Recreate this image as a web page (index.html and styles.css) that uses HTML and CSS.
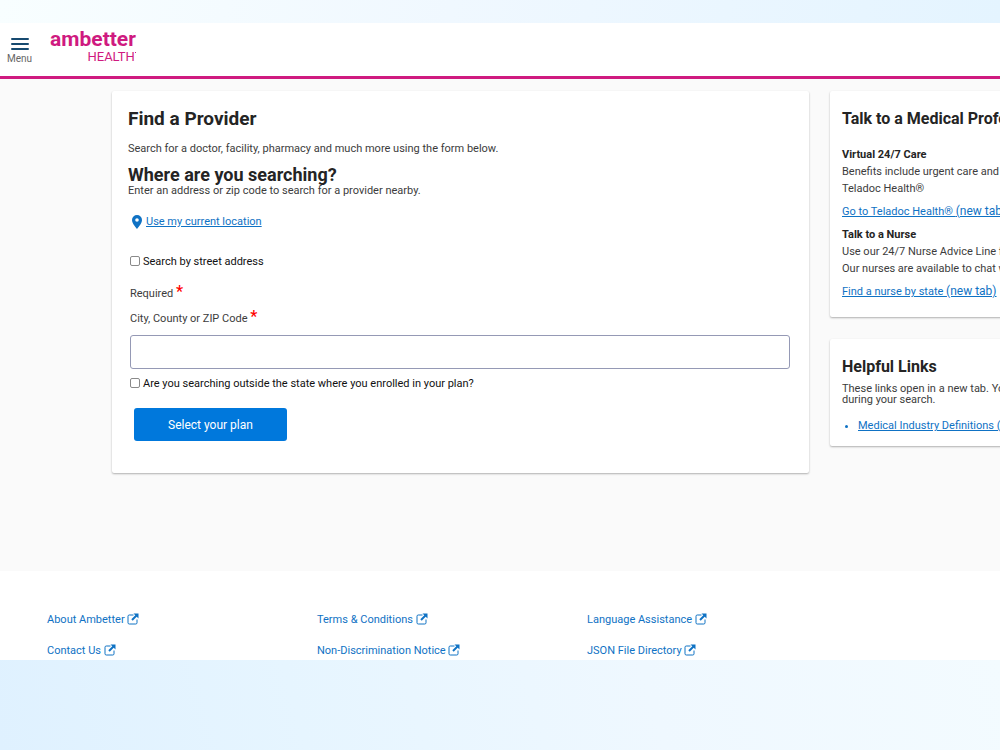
FILE: index.html
```
<!DOCTYPE html>
<html lang="en">
<head>
    <meta charset="UTF-8">
    <meta name="viewport" content="width=device-width, initial-scale=1.0">
    <title>Find a Provider - Ambetter Health</title>
    <link rel="stylesheet" href="styles.css">
</head>
<body>
    <svg class="sprite" aria-hidden="true">
        <symbol id="icon-external" viewBox="0 0 24 24">
            <path d="M13 4H4.500A2.500 2.500 0 0 0 2 6.500v13A2.500 2.500 0 0 0 4.500 22h13a2.500 2.500 0 0 0 2.500-2.500V13" fill="none" stroke="currentColor" stroke-width="2"/>
            <path d="M10 14 20 4" fill="none" stroke="currentColor" stroke-width="4"/>
            <path d="M13 1h10v10z" fill="currentColor"/>
        </symbol>
    </svg>

    <div class="site">
        <header class="site-header">
            <button type="button" class="menu-btn">
                <svg class="menu-icon" viewBox="0 0 20 14" aria-hidden="true">
                    <path d="M2 2h16M2 7h16M2 12h16" stroke="currentColor" stroke-width="2" stroke-linecap="round"/>
                </svg>
                Menu
            </button>
            <a href="#" class="logo">
                <span class="logo-name">ambetter</span>
                <span class="logo-sub">HEALTH<span class="logo-dot"></span></span>
            </a>
        </header>

        <main class="layout">
            <section class="card search-card">
                <h1>Find a Provider</h1>
                <p class="intro">Search for a doctor, facility, pharmacy and much more using the form below.</p>
                <h2>Where are you searching?</h2>
                <p>Enter an address or zip code to search for a provider nearby.</p>

                <form class="search-form">
                    <a href="#" class="location">
                        <svg class="pin" viewBox="0 0 10 14" aria-hidden="true">
                            <path fill-rule="evenodd" d="M5 0a5 5 0 0 0-5 5c0 3.500 5 9 5 9s5-5.500 5-9a5 5 0 0 0-5-5zm0 3.200a1.800 1.800 0 1 1 0 3.600 1.800 1.800 0 0 1 0-3.600z" fill="currentColor"/>
                        </svg>
                        <span>Use my current location</span>
                    </a>
                    <div class="check-row street">
                        <input type="checkbox" id="street">
                        <label for="street">Search by street address</label>
                    </div>
                    <p class="required">Required <span class="star">*</span></p>
                    <label class="field-label" for="place">City, County or ZIP Code <span class="star">*</span></label>
                    <input type="text" id="place" class="text-input">
                    <div class="check-row">
                        <input type="checkbox" id="outside">
                        <label for="outside">Are you searching outside the state where you enrolled in your plan?</label>
                    </div>
                    <button type="button" class="plan-btn">Select your plan</button>
                </form>
            </section>

            <aside class="sidebar">
                <section class="card side-card">
                    <h2>Talk to a Medical Professional</h2>
                    <div class="help-item">
                        <h3>Virtual 24/7 Care</h3>
                        <p>Benefits include urgent care and more from<br>Teladoc Health®</p>
                        <a href="#">Go to Teladoc Health® <span class="new-tab">(new tab)</span></a>
                    </div>
                    <div class="help-item">
                        <h3>Talk to a Nurse</h3>
                        <p>Use our 24/7 Nurse Advice Line for help.<br>Our nurses are available to chat with you.</p>
                        <a href="#">Find a nurse by state <span class="new-tab">(new tab)</span></a>
                    </div>
                </section>

                <section class="card side-card links-card">
                    <h2>Helpful Links</h2>
                    <p>These links open in a new tab. You can use them<br>during your search.</p>
                    <ul>
                        <li><a href="#">Medical Industry Definitions (PDF)</a></li>
                    </ul>
                </section>
            </aside>
        </main>

        <footer class="site-footer">
            <a href="#">About Ambetter <svg class="external"><use href="#icon-external"/></svg></a>
            <a href="#">Terms &amp; Conditions <svg class="external"><use href="#icon-external"/></svg></a>
            <a href="#">Language Assistance <svg class="external"><use href="#icon-external"/></svg></a>
            <a href="#">Contact Us <svg class="external"><use href="#icon-external"/></svg></a>
            <a href="#">Non-Discrimination Notice <svg class="external"><use href="#icon-external"/></svg></a>
            <a href="#">JSON File Directory <svg class="external"><use href="#icon-external"/></svg></a>
        </footer>
    </div>
</body>
</html>
```
FILE: styles.css
```
:root {
    --pink: #cf1a80;
    --link: #0f72c4;
    --button: #0078dc;
    --navy: #174a70;
    --text: #3c3c3c;
    --heading: #242424;
    --bg: #fafafa;
}

* {
    margin: 0;
    padding: 0;
    box-sizing: border-box;
}

body {
    min-height: 100vh;
    display: flex;
    flex-direction: column;
    padding: 23px 0 90px;
    overflow: hidden;
    font-family: Roboto, "Liberation Sans", sans-serif;
    font-size: 11px;
    line-height: 16px;
    color: var(--text);
    background:
        linear-gradient(100deg, #f8feff, #f0f8ff 45%, #e4f4ff) top / 100% 23px no-repeat,
        linear-gradient(75deg, #dff1ff, #e6f5ff 30%, #eff8ff 65%, #f3fbff) bottom / 100% 90px no-repeat;
}

a {
    color: var(--link);
}

h1,
h2,
h3 {
    color: var(--heading);
    font-weight: 700;
}

.sprite {
    display: none;
}

.site {
    flex: 1;
    display: flex;
    flex-direction: column;
    background: var(--bg);
    overflow: hidden;
}

/* Header */
.site-header {
    display: flex;
    align-items: flex-start;
    gap: 18px;
    height: 56px;
    padding: 5px 7px 0;
    background: #fff;
    border-bottom: 3px solid var(--pink);
}

.menu-btn {
    display: flex;
    flex-direction: column;
    align-items: center;
    gap: 2px;
    padding-top: 9px;
    border: 0;
    background: none;
    font: 10px/12px Roboto, sans-serif;
    color: #666;
    cursor: pointer;
}

.menu-icon {
    width: 20px;
    height: 14px;
    color: var(--navy);
}

.logo {
    display: flex;
    flex-direction: column;
    color: var(--pink);
    text-decoration: none;
}

.logo-name {
    font-size: 21px;
    line-height: 22px;
    font-weight: 700;
}

.logo-sub {
    display: flex;
    justify-content: flex-end;
    font-size: 13px;
    line-height: 13px;
}

.logo-dot {
    width: 1px;
    height: 1px;
    margin-top: 2px;
    background: var(--pink);
}

/* Cards */
.layout {
    flex: 1;
    display: grid;
    grid-template-columns: calc(70vw - 3px) 35vw;
    align-items: start;
    gap: 21px;
    padding: 12px 0 24px 112px;
}

.card {
    background: #fff;
    border-radius: 2px;
    box-shadow: 0 1px 2px rgba(0, 0, 0, 0.3);
}

.search-card {
    padding: 16px 19px 32px 16px;
}

.search-card h1 {
    font-size: 19px;
    line-height: 24px;
}

.search-card h2 {
    margin-top: 10px;
    font-size: 18px;
    line-height: 16px;
}

.intro {
    margin-top: 10px;
}

.search-form {
    display: flex;
    flex-direction: column;
    align-items: flex-start;
    padding: 15px 0 0 2px;
}

.location {
    display: flex;
    align-items: center;
    gap: 4px;
    padding-left: 2px;
    text-decoration: none;
}

.location span {
    text-decoration: underline;
}

.pin {
    width: 10px;
    height: 14px;
}

.check-row {
    display: flex;
    align-items: center;
    gap: 3px;
    margin-top: 7px;
    color: #111;
}

.check-row.street {
    margin-top: 24px;
}

.check-row input {
    appearance: none;
    width: 10px;
    height: 10px;
    margin-bottom: 2px;
    border: 1px solid #8a8a8a;
    border-radius: 2px;
    background: #fff;
}

.check-row input:checked {
    background: var(--button);
}

.required {
    margin-top: 16px;
}

.field-label {
    margin-top: 9px;
}

.star {
    color: #f00;
    font-size: 16px;
    font-weight: 500;
    line-height: 1px;
}

.text-input {
    width: 100%;
    height: 34px;
    margin-top: 8px;
    padding: 0 8px;
    border: 1px solid #9599b5;
    border-radius: 3px;
    font: inherit;
}

.plan-btn {
    height: 33px;
    margin: 16px 0 0 4px;
    padding: 0 34px;
    border: 0;
    border-radius: 3px;
    background: var(--button);
    color: #fff;
    font: 12px/16px Roboto, sans-serif;
    cursor: pointer;
}

/* Sidebar */
.sidebar {
    display: flex;
    flex-direction: column;
    gap: 22px;
    white-space: nowrap;
}

.side-card {
    padding: 16px 12px 17px;
    line-height: 17px;
}

.side-card h2 {
    margin-bottom: 15px;
    font-size: 16px;
    line-height: 24px;
}

.side-card h3 {
    font-size: 11px;
}

.help-item p {
    margin-bottom: 6px;
}

.help-item + .help-item {
    margin-top: 6px;
}

.new-tab {
    font-size: 12px;
}

.links-card {
    padding-bottom: 12px;
}

.links-card h2 {
    margin-bottom: 4px;
}

.links-card p {
    line-height: 11px;
}

.links-card ul {
    margin-top: 12px;
    padding-left: 16px;
    color: var(--link);
}

/* Footer */
.site-footer {
    display: grid;
    grid-template-columns: repeat(3, 27vw);
    align-content: start;
    gap: 15px 0;
    height: 89px;
    padding: 41px 47px 0;
    overflow: hidden;
    background: #fff;
}

.site-footer a {
    height: 16px;
    text-decoration: none;
}

.external {
    width: 12px;
    height: 12px;
    vertical-align: -2px;
}
```
